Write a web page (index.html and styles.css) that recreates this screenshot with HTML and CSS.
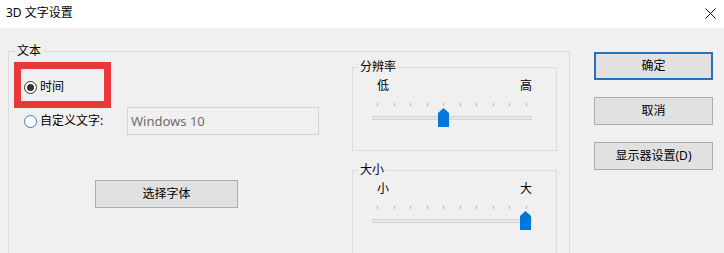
FILE: index.html
```html
<!DOCTYPE html>
<html lang="zh-CN">
<head>
<meta charset="utf-8">
<title>3D 文字设置</title>
<link rel="stylesheet" href="styles.css">
</head>
<body>
<div class="window">
  <div class="titlebar">
    <span class="title">3D 文字设置</span>
    <svg class="close" width="11" height="11" viewBox="0 0 11 11"><path d="M0.5 0.5 L10.5 10.5 M10.5 0.5 L0.5 10.5" stroke="#111" stroke-width="1" fill="none"/></svg>
  </div>
  <div class="content">
    <fieldset class="group main">
      <legend class="legend-main">文本</legend>
      <div class="main-grid">
        <div class="left-col">
          <div class="highlight">
            <span class="radio checked"></span>
            <span class="radio-label">时间</span>
          </div>
          <div class="row2">
            <span class="radio hover"></span>
            <span class="radio-label custom-label">自定义文字:</span>
            <div class="textbox">Windows 10</div>
          </div>
          <button class="btn font-btn">选择字体</button>
        </div>
        <div class="right-col">
          <fieldset class="group sub">
            <legend class="legend-sub">分辨率</legend>
            <div class="sub-body">
              <div class="labels"><span>低</span><span>高</span></div>
              <div class="slider">
                <div class="ticks"><i></i><i></i><i></i><i></i><i></i><i></i><i></i><i></i><i></i><i></i></div>
                <div class="track"></div>
                <div class="thumb" style="left:66px"></div>
              </div>
            </div>
          </fieldset>
          <fieldset class="group sub second">
            <legend class="legend-sub">大小</legend>
            <div class="sub-body">
              <div class="labels"><span>小</span><span>大</span></div>
              <div class="slider">
                <div class="ticks"><i></i><i></i><i></i><i></i><i></i><i></i><i></i><i></i><i></i><i></i></div>
                <div class="track"></div>
                <div class="thumb" style="left:148px"></div>
              </div>
            </div>
          </fieldset>
        </div>
      </div>
    </fieldset>
    <div class="buttons">
      <button class="btn default">确定</button>
      <button class="btn">取消</button>
      <button class="btn">显示器设置(D)</button>
    </div>
  </div>
</div>
</body>
</html>
```

FILE: styles.css
```css
* { box-sizing: border-box; }
html, body {
  margin: 0;
  padding: 0;
  width: 724px;
  height: 253px;
  overflow: hidden;
  background: #f0f0f0;
  font-family: "Noto Sans", "Noto Sans CJK SC", sans-serif;
  font-size: 12px;
  color: #000;
}
.window { width: 724px; height: 253px; overflow: hidden; }
.titlebar {
  height: 28px;
  background: #fff;
  display: flex;
  align-items: center;
  justify-content: space-between;
  padding: 0 8px 0 6px;
}
.title { font-size: 12px; line-height: 16px; margin-top: -2px; }
.close { display: block; margin-top: -2px; }

.content {
  display: flex;
  align-items: flex-start;
  padding-left: 8px;
}
.group {
  margin: 0;
  padding: 0;
  min-width: 0;
  border: 1px solid #dcdcdc;
}
.group legend {
  font-size: 12px;
  line-height: 16px;
  padding: 0 2px;
}
.main {
  width: 562px;
  height: 300px;
  margin-top: 15px;
}
.legend-main { margin-left: 6px; }
.legend-sub { margin-left: 5px; }

.main-grid { display: flex; }
.left-col { width: 343px; display: flex; flex-direction: column; align-items: flex-start; }
.right-col { width: 205px; display: flex; flex-direction: column; }

.highlight {
  margin: 3px 0 0 5px;
  width: 97px;
  height: 46px;
  border: 7px solid #e8383c;
  display: flex;
  align-items: center;
  padding: 4px 0 0 3px;
  position: relative;
  z-index: 1;
}
.radio {
  width: 13px;
  height: 13px;
  border-radius: 50%;
  border: 1px solid #333;
  background: #fff;
  flex: none;
  display: flex;
  align-items: center;
  justify-content: center;
}
.radio.checked::after {
  content: "";
  width: 7px;
  height: 7px;
  border-radius: 50%;
  background: #333;
}
.radio.hover { border-color: #2f80d0; }
.radio-label { margin-left: 3px; line-height: 16px; }
.row2 {
  margin-top: -1px;
  height: 28px;
  display: flex;
  align-items: center;
  padding-left: 15px;
}
.custom-label { width: 87px; }
.textbox {
  width: 192px;
  height: 28px;
  border: 1px solid #d4d4d4;
  background: #f0f0f0;
  color: #6d6d6d;
  font-family: "Noto Sans", sans-serif;
  font-size: 13px;
  line-height: 26px;
  padding-left: 3px;
}
.btn {
  display: block;
  height: 28px;
  width: 119px;
  background: #e1e1e1;
  border: 1px solid #adadad;
  font-family: "Noto Sans", "Noto Sans CJK SC", sans-serif;
  font-size: 12px;
  color: #000;
  padding: 0;
  line-height: 16px;
}
.font-btn {
  width: 143px;
  margin: 45px 0 0 86px;
}
.btn.default { border: 2px solid #2672c0; }

.sub { width: 205px; }
.sub.second { margin-top: 11px; }
.sub-body { height: 72px; }
.labels {
  margin: 3px 0 0 24px;
  width: 155px;
  display: flex;
  justify-content: space-between;
  line-height: 16px;
}
.slider {
  position: relative;
  margin: 9px 0 0 19px;
  width: 160px;
  height: 25px;
}
.ticks {
  display: flex;
  justify-content: space-between;
  padding: 0 5px;
  height: 3px;
}
.ticks i {
  display: block;
  width: 1px;
  height: 3px;
  background: #b9b9b9;
}
.track {
  margin-top: 10px;
  height: 4px;
  border: 1px solid #d6d6d6;
  background: #e7e7e7;
}
.thumb {
  position: absolute;
  top: 5px;
  width: 11px;
  height: 19px;
  background: #0078d7;
  clip-path: polygon(50% 0, 100% 5px, 100% 100%, 0 100%, 0 5px);
}

.buttons {
  margin-left: 24px;
  padding-top: 24px;
  display: flex;
  flex-direction: column;
  gap: 17px;
}
```
